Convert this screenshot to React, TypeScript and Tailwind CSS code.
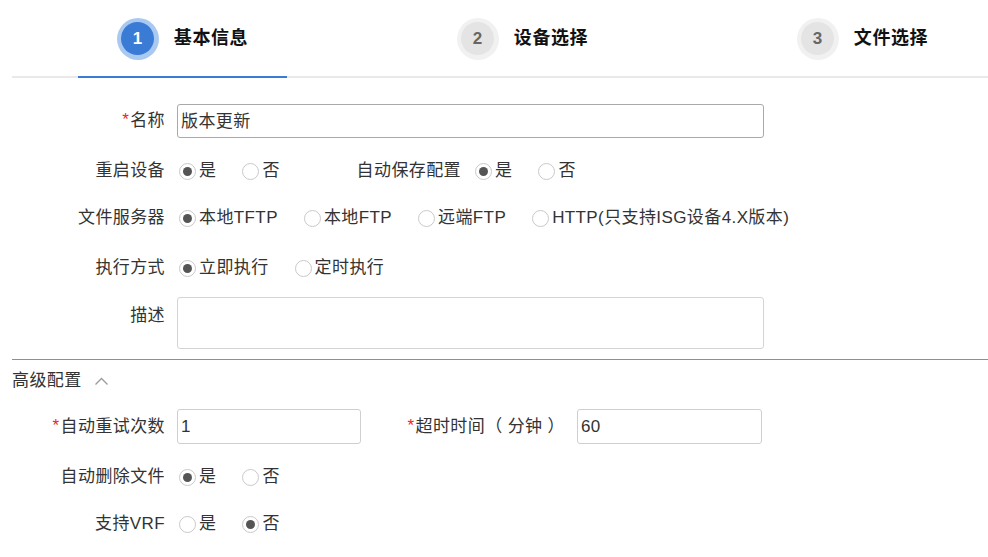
import React from "react";

const FONT = { fontFamily: '"Liberation Sans", "Noto Sans CJK SC", sans-serif' };

function Radio({ checked, label }: { checked?: boolean; label: string }) {
  return (
    <span className="flex items-center mr-[24px] shrink-0">
      <span className="ml-[2px] w-[17px] h-[17px] min-w-[17px] shrink-0 rounded-full border border-[#c9c9c9] bg-white flex items-center justify-center">
        {checked && <span className="w-[9px] h-[9px] shrink-0 rounded-full bg-[#555]" />}
      </span>
      <span className="ml-[3px] whitespace-nowrap">{label}</span>
    </span>
  );
}

function Label({ children, required, w = "w-[153px]" }: { children: React.ReactNode; required?: boolean; w?: string }) {
  return (
    <div className={`${w} shrink-0 text-right whitespace-nowrap`}>
      {required && <span className="text-[#ee2222] text-[17px] mr-[1px] relative -top-[1px]">*</span>}
      {children}
    </div>
  );
}

function Step({ n, title, active }: { n: number; title: string; active?: boolean }) {
  return (
    <div
      className={`w-[209px] shrink-0 flex items-center justify-center ${
        active ? "border-b-2 border-[#3a7bd5] -mb-[2px] h-[78px] pt-[1px]" : "h-[76px] pt-[1px]"
      }`}
    >
      <div
        className={`w-[42px] h-[42px] shrink-0 rounded-full flex items-center justify-center ${
          active ? "bg-[#aac9f0]" : "bg-[#f1f1f1]"
        }`}
      >
        <div
          className={`w-[33px] h-[33px] rounded-full flex items-center justify-center text-[17px] font-bold ${
            active ? "bg-[#3a7bd5] text-white" : "bg-[#e4e4e4] text-[#666]"
          }`}
        >
          {n}
        </div>
      </div>
      <div className="ml-[15px] text-[18px] font-bold text-[#111] tracking-[0.6px]">{title}</div>
    </div>
  );
}

export default function App() {
  return (
    <div className="w-[988px] h-[557px] bg-white text-[#333] text-[17px] overflow-hidden tracking-[0.4px]" style={FONT}>
      <div className="pl-[12px]">
        {/* Steps header */}
        <div className="flex border-b-2 border-[#e9e9e9] pl-[66px] gap-[131px] h-[78px]">
          <Step n={1} title="基本信息" active />
          <Step n={2} title="设备选择" />
          <Step n={3} title="文件选择" />
        </div>

        {/* 名称 */}
        <div className="flex items-center mt-[26px] h-[34px]">
          <Label required>名称</Label>
          <div className="ml-[12px] w-[587px] h-[34px] border border-[#a9a9a9] rounded-[3px] flex items-center px-[3px] pt-[1px]">
            版本更新
          </div>
        </div>

        {/* 重启设备 */}
        <div className="flex items-center mt-[18px] h-[30px]">
          <Label>重启设备</Label>
          <div className="ml-[12px] w-[160px] flex items-center">
            <Radio checked label="是" />
            <Radio label="否" />
          </div>
          <Label w="w-[124px]">自动保存配置</Label>
          <div className="ml-[12px] flex items-center">
            <Radio checked label="是" />
            <Radio label="否" />
          </div>
        </div>

        {/* 文件服务器 */}
        <div className="flex items-center mt-[17px] h-[30px]">
          <Label>文件服务器</Label>
          <div className="ml-[12px] flex items-center">
            <Radio checked label="本地TFTP" />
            <Radio label="本地FTP" />
            <Radio label="远端FTP" />
            <Radio label="HTTP(只支持ISG设备4.X版本)" />
          </div>
        </div>

        {/* 执行方式 */}
        <div className="flex items-center mt-[20px] h-[30px]">
          <Label>执行方式</Label>
          <div className="ml-[12px] flex items-center">
            <Radio checked label="立即执行" />
            <Radio label="定时执行" />
          </div>
        </div>

        {/* 描述 */}
        <div className="flex items-start mt-[14px]">
          <div className="pt-[6px]">
            <Label>描述</Label>
          </div>
          <div className="ml-[12px] w-[587px] h-[52px] border border-[#d4d4d4] rounded-[3px]" />
        </div>

        <div className="mt-[10px] h-[1px] bg-[#8f8f8f]" />

        {/* 高级配置 */}
        <div className="flex items-center mt-[9px] h-[24px]">
          <span>高级配置</span>
          <svg className="ml-[12px]" width="15" height="10" viewBox="0 0 15 10" fill="none">
            <polyline points="1.5,8.5 7.5,2.5 13.5,8.5" stroke="#9a9a9a" strokeWidth="1.3" />
          </svg>
        </div>

        {/* 自动重试次数 */}
        <div className="flex items-center mt-[16px] h-[35px]">
          <Label required>自动重试次数</Label>
          <div className="ml-[12px] w-[184px] h-[35px] border border-[#cfcfcf] rounded-[3px] flex items-center px-[3px] pt-[1px]">
            1
          </div>
          <Label required w="w-[204px]">超时时间（ 分钟 ）</Label>
          <div className="ml-[12px] w-[185px] h-[35px] border border-[#cfcfcf] rounded-[3px] flex items-center px-[3px] pt-[1px]">
            60
          </div>
        </div>

        {/* 自动删除文件 */}
        <div className="flex items-center mt-[18px] h-[30px]">
          <Label>自动删除文件</Label>
          <div className="ml-[12px] flex items-center">
            <Radio checked label="是" />
            <Radio label="否" />
          </div>
        </div>

        {/* 支持VRF */}
        <div className="flex items-center mt-[17px] h-[30px]">
          <Label>支持VRF</Label>
          <div className="ml-[12px] flex items-center">
            <Radio label="是" />
            <Radio checked label="否" />
          </div>
        </div>
      </div>
    </div>
  );
}
